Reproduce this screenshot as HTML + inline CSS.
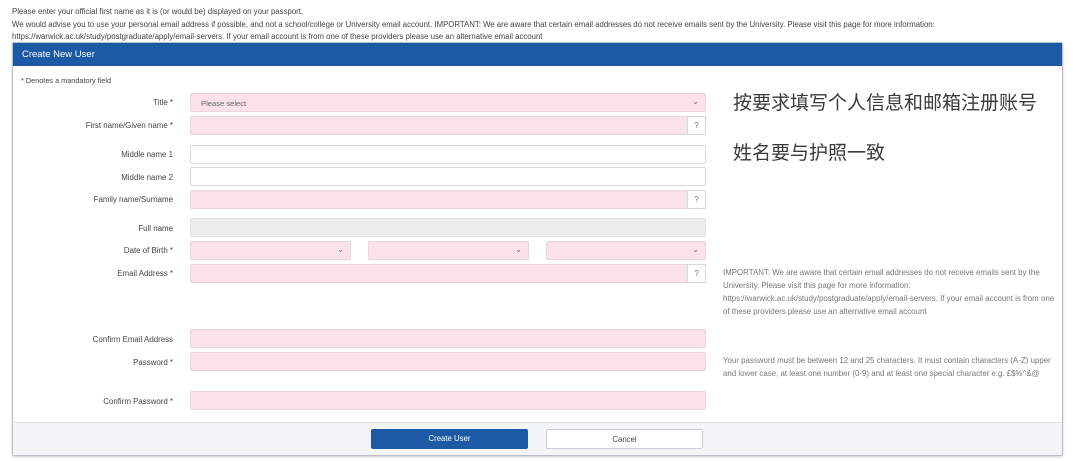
<!DOCTYPE html>
<html><head><meta charset="utf-8"><style>
*{box-sizing:border-box;margin:0;padding:0}
body{width:1080px;height:461px;background:#fff;font-family:"Liberation Sans",sans-serif;color:#333;position:relative;overflow:hidden}
.t{position:absolute;font-size:7.8px;color:#444;white-space:nowrap}
#panel{position:absolute;left:12px;top:42px;width:1051px;height:414px;border:1px solid #b8bfc8;border-radius:2px;box-shadow:0 1px 2px #ccc}
#hdr{position:absolute;left:0;top:0;right:0;height:23px;background:#1d5aa5;color:#fff;font-size:9.5px;line-height:23px;padding-left:9px}
#ftr{position:absolute;left:0;right:0;bottom:0;height:33px;background:#f4f5f7;border-top:1px solid #dde0e4}
.lbl{position:absolute;right:907px;font-size:7.9px;color:#444;text-align:right;white-space:nowrap}
.in{position:absolute;height:19px;border:1px solid #ead5dc;background:#fbe1e8;border-radius:2px}
.w{background:#fff;border-color:#d5d9de}
.g{background:#eeeeef;border-color:#e0e0e0}
.q{position:absolute;right:-1px;top:-1px;width:19px;height:19px;background:#fff;border:1px solid #d5d9de;font-size:8px;color:#777;text-align:center;line-height:18px}
.ch{position:absolute;right:6px;top:3px;font-size:8px;color:#666}
.cn{position:absolute;left:733px;font-size:19px;color:#3a3a3a;font-family:"Liberation Sans","Noto Sans CJK SC",sans-serif}
.hp{position:absolute;left:723px;font-size:7.9px;color:#777;line-height:13px;white-space:nowrap}
.btn{position:absolute;top:429px;height:20px;font-size:7.8px;text-align:center;line-height:19px;border-radius:2px}
</style></head><body>
<div class="t" style="left:12px;top:7px">Please enter your official first name as it is (or would be) displayed on your passport.</div>
<div class="t" style="left:12px;top:20px">We would advise you to use your personal email address if possible, and not a school/college or University email account. IMPORTANT: We are aware that certain email addresses do not receive emails sent by the University. Please visit this page for more information:</div>
<div class="t" style="left:12px;top:32px">https://warwick.ac.uk/study/postgraduate/apply/email-servers. If your email account is from one of these providers please use an alternative email account</div>
<div id="panel"><div id="hdr">Create New User</div><div id="ftr"></div></div>
<div class="t" style="left:21px;top:76px;font-size:7.3px">* Denotes a mandatory field</div>

<div class="lbl" style="top:98px">Title *</div>
<div class="in" style="left:190px;top:93px;width:516px"><span style="position:absolute;left:10px;top:5px;font-size:7.6px;color:#666">Please select</span><span class="ch">⌄</span></div>
<div class="lbl" style="top:121px">First name/Given name *</div>
<div class="in" style="left:190px;top:116px;width:516px"><div class="q">?</div></div>
<div class="lbl" style="top:150px">Middle name 1</div>
<div class="in w" style="left:190px;top:145px;width:516px"></div>
<div class="lbl" style="top:173px">Middle name 2</div>
<div class="in w" style="left:190px;top:167px;width:516px"></div>
<div class="lbl" style="top:195px">Family name/Surname</div>
<div class="in" style="left:190px;top:190px;width:516px"><div class="q">?</div></div>
<div class="lbl" style="top:224px">Full name</div>
<div class="in g" style="left:190px;top:218px;width:516px"></div>
<div class="lbl" style="top:246px">Date of Birth *</div>
<div class="in" style="left:190px;top:241px;width:161px"><span class="ch">⌄</span></div>
<div class="in" style="left:368px;top:241px;width:161px"><span class="ch">⌄</span></div>
<div class="in" style="left:546px;top:241px;width:160px"><span class="ch">⌄</span></div>
<div class="lbl" style="top:269px">Email Address *</div>
<div class="in" style="left:190px;top:264px;width:516px"><div class="q">?</div></div>
<div class="lbl" style="top:335px">Confirm Email Address</div>
<div class="in" style="left:190px;top:329px;width:516px"></div>
<div class="lbl" style="top:358px">Password *</div>
<div class="in" style="left:190px;top:352px;width:516px"></div>
<div class="lbl" style="top:397px">Confirm Password *</div>
<div class="in" style="left:190px;top:391px;width:516px"></div>

<div class="cn" style="top:88px">按要求填写个人信息和邮箱注册账号</div>
<div class="cn" style="top:138px">姓名要与护照一致</div>
<div class="hp" style="top:266px">IMPORTANT: We are aware that certain email addresses do not receive emails sent by the<br>University. Please visit this page for more information:<br>https://warwick.ac.uk/study/postgraduate/apply/email-servers. If your email account is from one<br>of these providers please use an alternative email account</div>
<div class="hp" style="top:354px">Your password must be between 12 and 25 characters. It must contain characters (A-Z) upper<br>and lower case, at least one number (0-9) and at least one special character e.g. £$%^&amp;@</div>

<div class="btn" style="left:371px;width:157px;background:#1d5aa5;color:#fff">Create User</div>
<div class="btn" style="left:546px;width:157px;background:#fff;border:1px solid #ccd;color:#444">Cancel</div>
</body></html>
